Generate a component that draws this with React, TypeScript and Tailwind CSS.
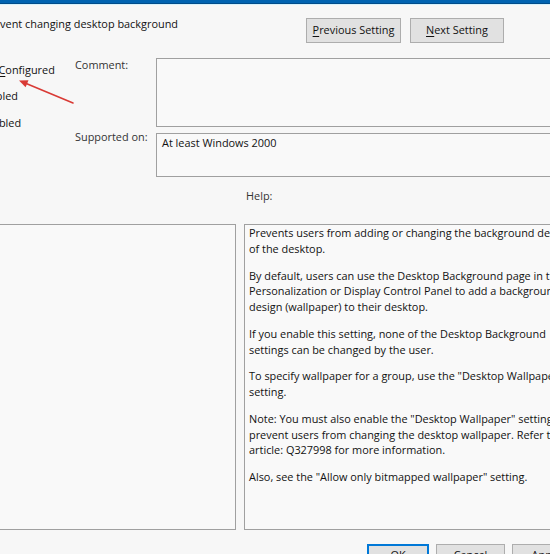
import React from "react";

const helpParagraphs: string[][] = [
  ["Prevents users from adding or changing the background design", "of the desktop."],
  [
    "By default, users can use the Desktop Background page in the",
    "Personalization or Display Control Panel to add a background",
    "design (wallpaper) to their desktop.",
  ],
  ["If you enable this setting, none of the Desktop Background", "settings can be changed by the user."],
  ['To specify wallpaper for a group, use the "Desktop Wallpaper"', "setting."],
  [
    'Note: You must also enable the "Desktop Wallpaper" setting to',
    "prevent users from changing the desktop wallpaper. Refer to KB",
    "article: Q327998 for more information.",
  ],
  ['Also, see the "Allow only bitmapped wallpaper" setting.'],
];

export default function App() {
  return (
    <div
      className="relative w-[550px] h-[554px] overflow-hidden bg-[#f7f7f7] text-[#111] text-[10.9px]"
      style={{ fontFamily: '"Open Sans", "Noto Sans", sans-serif' }}
    >
      {/* title bar edge */}
      <div className="h-[4px] bg-[#0063b1] border-b border-[#004c8a]" />
      <div className="h-[1px] bg-[#d6f2fc]" />

      <div className="ml-[-30px] w-[610px]">
        {/* header row */}
        <div className="flex items-start h-[53px]">
          <div className="flex-1 pl-[13px] pt-[11px] leading-[16px]">Prevent changing desktop background</div>
          <div className="flex gap-[9px] pt-[13px] mr-[76px]">
            <button className="w-[95px] h-[25px] bg-[#e1e1e1] border border-[#adadad]">
              <span className="underline underline-offset-2">P</span>revious Setting
            </button>
            <button className="w-[94px] h-[25px] bg-[#e1e1e1] border border-[#adadad]">
              <span className="underline underline-offset-2">N</span>ext Setting
            </button>
          </div>
        </div>

        {/* state + comment + supported */}
        <div className="flex">
          <div className="w-[105px] pl-[7px] pt-[3px] leading-[16px]">
            <div className="h-[26px] pt-[1px]">
              Not <span className="underline underline-offset-2">C</span>onfigured
            </div>
            <div className="h-[27px] pt-[1px]">
              <span className="underline underline-offset-2">E</span>nabled
            </div>
            <div className="h-[26px] pt-[1px]">
              <span className="underline underline-offset-2">D</span>isabled
            </div>
          </div>
          <div className="w-[81px] leading-[16px] text-[#333]">
            <div className="h-[72px] -mt-[1px]">Comment:</div>
            <div>Supported on:</div>
          </div>
          <div className="flex flex-col gap-[6px]">
            <div className="w-[420px] h-[69px] border border-[#a0a0a0] bg-[#f9f9f9]" />
            <div className="w-[420px] h-[44px] border border-[#a0a0a0] bg-[#f9f9f9] px-[5px] pt-[1px] leading-[16px]">
              At least Windows 2000
            </div>
          </div>
        </div>

        {/* help label */}
        <div className="h-[47px] pl-[276px] pt-[11px] leading-[16px] text-[#333]">Help:</div>

        {/* options + help boxes */}
        <div className="flex gap-[8px] pl-[10px]">
          <div className="w-[256px] h-[306px] border border-[#a0a0a0] bg-[#f9f9f9]" />
          <div className="w-[330px] h-[306px] border border-[#a0a0a0] bg-[#f9f9f9] pl-[4px] leading-[15.75px] whitespace-nowrap overflow-hidden">
            {helpParagraphs.map((p, i) => (
              <div key={i} className="mb-[11px]">
                {p.map((line, j) => (
                  <div key={j}>{line}</div>
                ))}
              </div>
            ))}
          </div>
        </div>

        {/* bottom buttons */}
        <div className="flex gap-[7px] pl-[397px] pt-[14px]">
          <button className="w-[69px] h-[23px] bg-[#e1e1e1] border-2 border-[#0078d7]">OK</button>
          <button className="w-[76px] h-[23px] bg-[#e1e1e1] border border-[#adadad]">Cancel</button>
          <button className="w-[76px] h-[23px] bg-[#e1e1e1] border border-[#adadad]">
            <span className="underline underline-offset-2">A</span>pply
          </button>
        </div>
      </div>

      {/* annotation arrow */}
      <svg className="absolute left-0 top-0 pointer-events-none" width="100" height="120" viewBox="0 0 100 120">
        <line x1="73" y1="103" x2="25" y2="83" stroke="#d93a35" strokeWidth="1.6" strokeLinecap="round" />
        <path d="M19 80.5 L28.5 80.2 L25.6 87.2 Z" fill="#d93a35" />
      </svg>
    </div>
  );
}
